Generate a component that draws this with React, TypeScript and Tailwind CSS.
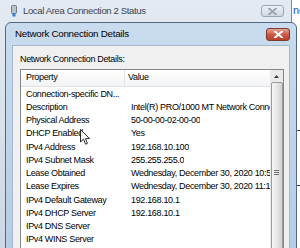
import React from 'react';

const rows: [string, string][] = [
  ['Connection-specific DN...', ''],
  ['Description', 'Intel(R) PRO/1000 MT Network Connection'],
  ['Physical Address', '50-00-00-02-00-00'],
  ['DHCP Enabled', 'Yes'],
  ['IPv4 Address', '192.168.10.100'],
  ['IPv4 Subnet Mask', '255.255.255.0'],
  ['Lease Obtained', 'Wednesday, December 30, 2020 10:53:12 AM'],
  ['Lease Expires', 'Wednesday, December 30, 2020 11:13:12 AM'],
  ['IPv4 Default Gateway', '192.168.10.1'],
  ['IPv4 DHCP Server', '192.168.10.1'],
  ['IPv4 DNS Server', ''],
  ['IPv4 WINS Server', ''],
];

const CloseX: React.FC<{ color: string }> = ({ color }) => (
  <svg width="9" height="7" viewBox="0 0 9 7">
    <path d="M1 0.5 L8 6.5 M8 0.5 L1 6.5" stroke={color} strokeWidth="2" strokeLinecap="square" />
  </svg>
);

const App: React.FC = () => {
  return (
    <div className="relative w-[300px] h-[248px] overflow-hidden bg-white font-['Liberation_Sans',Arial,sans-serif] text-black">
      {/* window behind, other app */}
      <span className="absolute left-[293px] top-[3px] text-[11px] leading-[14px] text-[#2457c5]">ne</span>
      <span className="absolute left-[297px] top-[130px] w-[3px] h-[1px] bg-[#444]" />
      <span className="absolute left-[297px] top-[185px] w-[3px] h-[1px] bg-[#444]" />

      {/* outer window: Local Area Connection 2 Status */}
      <div className="absolute left-0 top-0 w-[292px] h-[248px] border-r border-[#7d8a99] bg-gradient-to-b from-[#e3eaf2] to-[#cdd7e2]">
        <div className="h-[22px] flex items-center">
          <svg className="ml-[11px]" width="6" height="12" viewBox="0 0 6 12">
            <rect x="0.5" y="0.5" width="5" height="8" rx="1" fill="#b9c3cc" stroke="#6f7b87" />
            <rect x="1.5" y="8" width="3" height="3.5" fill="#3b7fd0" />
          </svg>
          <span className="ml-[6px] text-[9.5px] tracking-[-0.35px] leading-[14px] text-[#3a4350] whitespace-nowrap">
            Local Area Connection 2 Status
          </span>
          <div className="ml-auto mr-[7px] w-[23px] h-[12px] rounded-[3px] border border-[#9aa7b5] bg-gradient-to-b from-[#eef2f6] to-[#cfd8e2] flex items-center justify-center">
            <CloseX color="#9da7b2" />
          </div>
        </div>
      </div>

      {/* inner dialog: Network Connection Details */}
      <div className="absolute left-[5px] top-[22px] w-[292px] h-[240px] rounded-t-[6px] border border-[#55687f] bg-gradient-to-b from-[#c9dbee] to-[#b4cce6] flex flex-col">
        <div className="h-[22px] shrink-0 flex items-center">
          <span className="ml-[9px] text-[9.75px] tracking-[-0.25px] leading-[14px] text-black whitespace-nowrap">
            Network Connection Details
          </span>
          <div className="ml-auto mr-[6px] mt-[1px] w-[24px] h-[13px] rounded-[3px] border border-[#7d3a30] bg-gradient-to-b from-[#e8a394] via-[#cc5a45] to-[#b8402c] flex items-center justify-center">
            <CloseX color="#ffffff" />
          </div>
        </div>

        <div className="mx-[6px] flex-1 bg-[#f0f0f0] border border-[#a6b8cc] flex flex-col text-[9px] tracking-[-0.33px]">
          <div className="ml-[7px] mt-[7px] leading-[12px] whitespace-nowrap">
            Network Connection Details:
          </div>
          <div className="ml-[7px] mt-[4px] w-[264px] flex-1 border border-[#828790] bg-white flex overflow-hidden">
            <div className="w-[249px] flex flex-col">
              <div className="h-[17px] shrink-0 flex items-center bg-gradient-to-b from-white to-[#f2f3f5] border-b border-[#e2e4e7]">
                <div className="w-[104px] h-full flex items-center pl-[5px] border-r border-[#e2e4e7]">Property</div>
                <div className="pl-[3px]">Value</div>
              </div>
              {rows.map(([k, v]) => (
                <div key={k} className="h-[13.25px] shrink-0 flex items-center leading-[12px]">
                  <div className="w-[104px] shrink-0 pl-[5px] whitespace-nowrap overflow-hidden">{k}</div>
                  <div className="pl-[6px] whitespace-nowrap overflow-hidden">{v}</div>
                </div>
              ))}
            </div>

            {/* vertical scrollbar */}
            <div className="w-[13px] shrink-0 bg-[#eaeaea] flex flex-col">
              <div className="h-[12px] shrink-0 flex items-center justify-center">
                <svg width="5" height="3" viewBox="0 0 5 3">
                  <path d="M0 3 L2.5 0 L5 3 Z" fill="#3d3d3d" />
                </svg>
              </div>
              <div className="flex-1 mx-[0.5px] rounded-t-[2px] border border-[#9b9b9b] bg-gradient-to-r from-[#f5f5f5] via-[#e6e6e6] to-[#d2d2d2] flex flex-col items-center">
                <div className="mt-[87px] flex flex-col gap-[1px]">
                  <span className="w-[5px] h-[1px] bg-[#707070]" />
                  <span className="w-[5px] h-[1px] bg-[#707070]" />
                  <span className="w-[5px] h-[1px] bg-[#707070]" />
                </div>
              </div>
            </div>
          </div>
        </div>
      </div>

      {/* mouse pointer */}
      <svg className="absolute left-[80px] top-[129px]" width="11" height="17" viewBox="0 0 11 17">
        <path
          d="M0.5 0.5 L0.5 13 L3.5 10.2 L5.6 15.2 L7.4 14.4 L5.4 9.6 L9.5 9.6 Z"
          fill="#ffffff"
          fillOpacity="0.85"
          stroke="#2a2a2a"
          strokeWidth="1"
          strokeLinejoin="round"
        />
      </svg>
    </div>
  );
};

export default App;
